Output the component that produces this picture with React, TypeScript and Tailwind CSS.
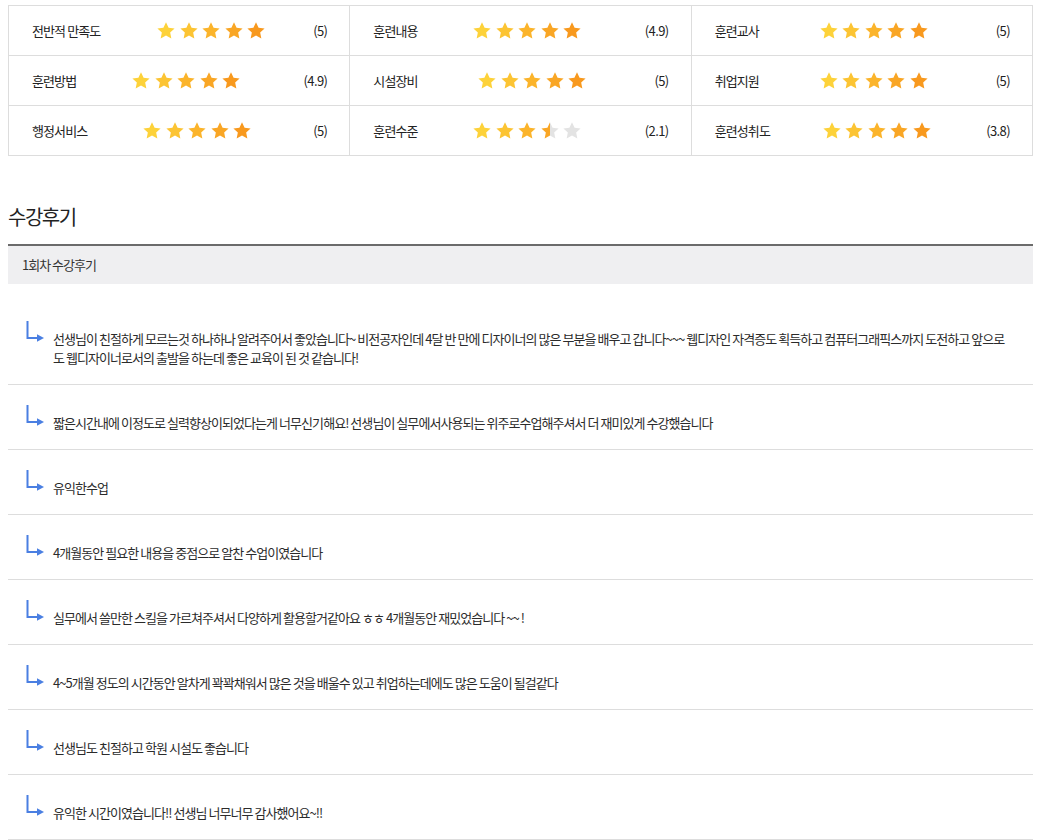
import React from 'react';

type Score = { label: string; gap: number; fill: number; score: string };

const SCORES: Score[] = [
  { label: '전반적 만족도', gap: 124, fill: 5, score: '(5)' },
  { label: '훈련내용', gap: 99, fill: 5, score: '(4.9)' },
  { label: '훈련교사', gap: 104, fill: 5, score: '(5)' },
  { label: '훈련방법', gap: 99, fill: 5, score: '(4.9)' },
  { label: '시설장비', gap: 104, fill: 5, score: '(5)' },
  { label: '취업지원', gap: 104, fill: 5, score: '(5)' },
  { label: '행정서비스', gap: 110, fill: 5, score: '(5)' },
  { label: '훈련수준', gap: 99, fill: 3.5, score: '(2.1)' },
  { label: '훈련성취도', gap: 107, fill: 5, score: '(3.8)' },
];

const STAR_COLORS = ['#fdd23a', '#fcc433', '#fbb42b', '#f9a625', '#f8991e'];

const REVIEWS = [
  '선생님이 친절하게 모르는것 하나하나 알려주어서 좋았습니다~ 비전공자인데 4달 반 만에 디자이너의 많은 부분을 배우고 갑니다~~~ 웹디자인 자격증도 획득하고 컴퓨터그래픽스까지 도전하고 앞으로도 웹디자이너로서의 출발을 하는데 좋은 교육이 된 것 같습니다!',
  '짧은시간내에 이정도로 실력향상이되었다는게 너무신기해요! 선생님이 실무에서사용되는 위주로수업해주셔서 더 재미있게 수강했습니다',
  '유익한수업',
  '4개월동안 필요한 내용을 중점으로 알찬 수업이였습니다',
  '실무에서 쓸만한 스킬을 가르쳐주셔서 다양하게 활용할거같아요 ㅎㅎ 4개월동안 재밌었습니다 ~~ !',
  '4~5개월 정도의 시간동안 알차게 꽉꽉채워서 많은 것을 배울수 있고 취업하는데에도 많은 도움이 될걸같다',
  '선생님도 친절하고 학원 시설도 좋습니다',
  '유익한 시간이였습니다!! 선생님 너무너무 감사했어요~!!',
];

const STAR = '12,1.5 15.1,8 22.3,8.9 17,13.9 18.4,21 12,17.5 5.6,21 7,13.9 1.7,8.9 8.9,8';

const Star = ({ color, part, id }: { color: string; part: number; id: string }) => (
  <svg width="20" height="20" viewBox="0 0 24 24">
    {part > 0 && part < 1 && (
      <defs>
        <linearGradient id={id} x1="0" x2="1" y1="0" y2="0">
          <stop offset={part} stopColor={color} />
          <stop offset={part} stopColor="#e3e3e3" />
        </linearGradient>
      </defs>
    )}
    <polygon
      points={STAR}
      fill={part >= 1 ? color : part <= 0 ? '#e3e3e3' : `url(#${id})`}
    />
  </svg>
);

const Stars = ({ fill, idx }: { fill: number; idx: number }) => (
  <div className="flex items-center gap-[2.5px]">
    {STAR_COLORS.map((c, i) => (
      <Star key={i} color={c} part={Math.max(0, Math.min(1, fill - i))} id={`half-${idx}-${i}`} />
    ))}
  </div>
);

const ReplyArrow = () => (
  <svg width="18" height="21" viewBox="0 0 18 21" className="shrink-0 -mt-[8px]">
    <path d="M1.5 0 V17 H12" stroke="#4a7fe2" strokeWidth="2" fill="none" />
    <polygon points="11,13.2 18,17 11,20.8" fill="#4a7fe2" />
  </svg>
);

export default function App() {
  return (
    <div className="bg-white min-h-screen pt-[5px] pl-2 pr-4 font-['Noto_Sans_CJK_KR','Noto_Sans',sans-serif] text-[#222]">
      {/* Score table */}
      <div className="grid grid-cols-3 border-t border-l border-[#dddddd]">
        {SCORES.map((s, i) => (
          <div
            key={s.label}
            className="h-[50px] flex items-center pl-[23px] pr-[22px] border-r border-b border-[#dddddd] text-[13px] tracking-[-0.9px]"
          >
            <span className="shrink-0" style={{ width: s.gap }}>{s.label}</span>
            <Stars fill={s.fill} idx={i} />
            <span className="ml-auto text-[13px] tracking-[-0.6px]">{s.score}</span>
          </div>
        ))}
      </div>

      {/* Reviews */}
      <h2 className="mt-[47px] text-[20px] leading-[28px] tracking-[-1.5px] text-[#222]">수강후기</h2>
      <div className="mt-[13px] border-t-2 border-[#6b6b6b]">
        <div className="h-[38px] bg-[#efeff1] flex items-center pl-[14px] text-[13px] tracking-[-1px] text-[#333]">
          1회차 수강후기
        </div>
        <ul className="mt-[17px]">
          {REVIEWS.map((r, i) => (
            <li key={i} className="flex items-start gap-[9px] pl-[18px] pr-[18px] pt-[28px] pb-[17px] border-b border-[#dddddd]">
              <ReplyArrow />
              <p className="text-[13px] leading-[19px] tracking-[-0.95px] text-[#2b2b2b] break-all">{r}</p>
            </li>
          ))}
        </ul>
      </div>
    </div>
  );
}
